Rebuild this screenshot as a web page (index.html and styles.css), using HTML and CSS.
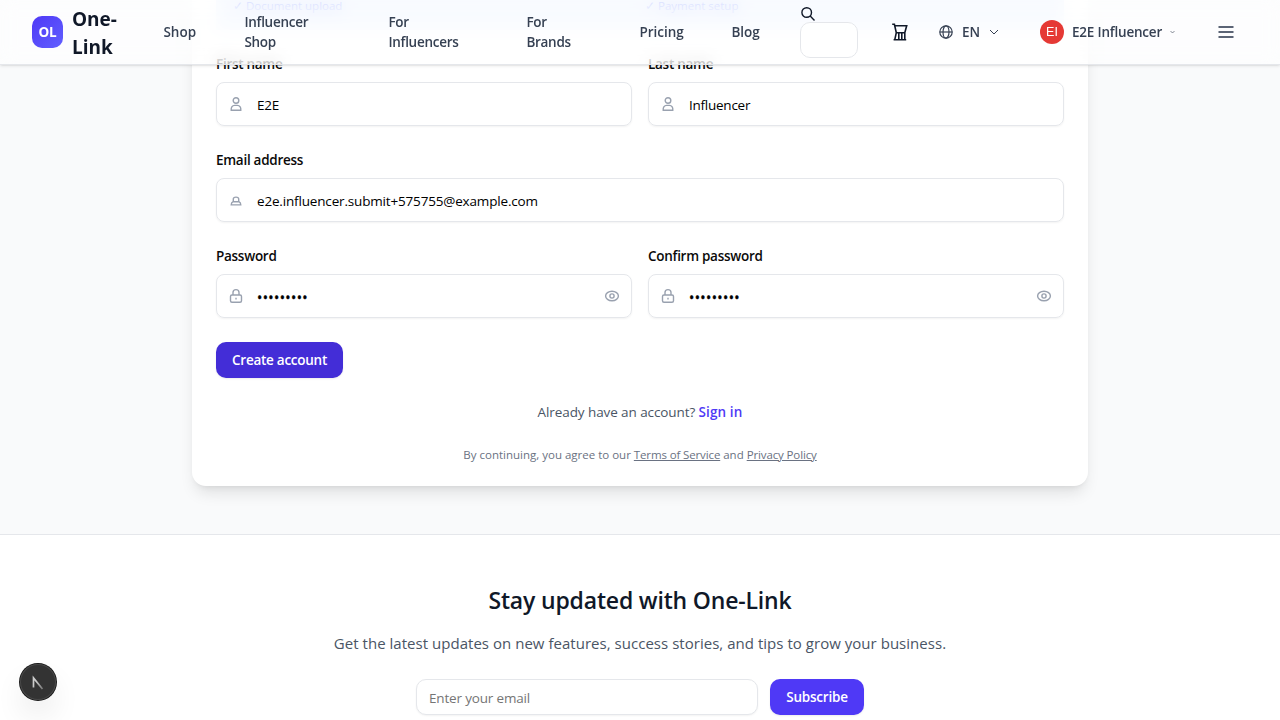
FILE: index.html
```html
<!DOCTYPE html>
<html lang="en">
<head>
<meta charset="utf-8">
<title>One-Link – Create account</title>
<link rel="stylesheet" href="styles.css">
</head>
<body>
<svg class="sprite" aria-hidden="true">
  <symbol id="user" viewBox="0 0 16 16"><circle cx="8" cy="4.500" r="2.800"/><path d="M3.200 14.200c-.3-3 1.300-4.800 3.300-4.800h3c2 0 3.600 1.800 3.300 4.800z"/></symbol>
  <symbol id="mail" viewBox="0 0 16 16"><path d="M5.300 9.700V7.100c0-1.300 1-2 2.700-2s2.700.7 2.700 2v2.600M5.100 9.700h5.800c1.300.6 1.900 1.700 1.900 3.200H3.200c0-1.500.6-2.600 1.900-3.200z"/></symbol>
  <symbol id="lock" viewBox="0 0 16 16"><path d="M5 7V4.400C5 2.600 6 1.600 8 1.600s3 1 3 2.800V7"/><rect x="2.500" y="7" width="11" height="7.200" rx="1.500"/><path d="M8 9.700v1.800"/></symbol>
  <symbol id="eye" viewBox="0 0 16 16"><ellipse cx="8" cy="8" rx="6.400" ry="4.700"/><circle cx="8" cy="8" r="2.100"/></symbol>
</svg>

<header class="header">
  <a class="brand"><span class="logo">OL</span><span class="brand-name">One-<br>Link</span></a>
  <a class="nav">Shop</a>
  <a class="nav tight">Influencer<br>Shop</a>
  <a class="nav tight">For<br>Influencers</a>
  <a class="nav tight">For<br>Brands</a>
  <a class="nav">Pricing</a>
  <a class="nav">Blog</a>
  <div class="search">
    <svg width="16" height="16" viewBox="0 0 16 16"><circle cx="6.700" cy="6.500" r="4.800"/><path d="M10.200 10.100l4.300 4.300"/></svg>
    <input class="search-box" aria-label="Search">
  </div>
  <svg class="cart" width="18" height="20" viewBox="0 0 18 20"><path d="M1.200 2.300h2.200l1.900 8.400h8.500L15.700 3.700H4M5.300 10.700l-1.500 7M13.800 10.700v7M2.600 17.700h12.600M7.800 11v6.500M10.800 11v6.500"/></svg>
  <div class="lang">
    <svg width="14" height="14" viewBox="0 0 14 14"><circle cx="7" cy="7" r="6.200"/><ellipse cx="7" cy="7" rx="3" ry="6.200"/><path d="M.8 7h12.400"/></svg>
    <span>EN</span>
    <svg class="chev" width="10" height="6" viewBox="0 0 10 6"><path d="M1 1l4 4 4-4"/></svg>
  </div>
  <div class="account">
    <span class="avatar">EI</span><span>E2E Influencer</span>
    <svg class="chev-small" width="5" height="4" viewBox="0 0 5 4"><path d="M.5 1l2 2 2-2"/></svg>
  </div>
  <svg class="menu" width="16" height="14" viewBox="0 0 16 14"><path d="M.5 2h15M.5 7h15M.5 12h15"/></svg>
</header>

<main class="main">
  <section class="card">
    <div class="steps"><span>✓ Document upload</span><span>✓ Payment setup</span></div>
    <form class="form">
      <div class="pair">
        <label class="field"><span class="label">First name</span>
          <span class="control"><svg><use href="#user"/></svg><span class="value">E2E</span></span></label>
        <label class="field"><span class="label">Last name</span>
          <span class="control"><svg><use href="#user"/></svg><span class="value">Influencer</span></span></label>
      </div>
      <label class="field"><span class="label">Email address</span>
        <span class="control"><svg><use href="#mail"/></svg><span class="value email">e2e.influencer.submit+575755@example.com</span></span></label>
      <div class="pair">
        <label class="field"><span class="label">Password</span>
          <span class="control"><svg><use href="#lock"/></svg><span class="value dots">•••••••••</span><svg><use href="#eye"/></svg></span></label>
        <label class="field"><span class="label">Confirm password</span>
          <span class="control"><svg><use href="#lock"/></svg><span class="value dots">•••••••••</span><svg><use href="#eye"/></svg></span></label>
      </div>
      <button class="button create" type="button">Create account</button>
    </form>
    <p class="signin">Already have an account? <a>Sign in</a></p>
    <p class="legal">By continuing, you agree to our <a>Terms of Service</a> and <a>Privacy Policy</a></p>
  </section>
</main>

<footer class="footer">
  <h2>Stay updated with One-Link</h2>
  <p>Get the latest updates on new features, success stories, and tips to grow your business.</p>
  <div class="subscribe">
    <input type="email" placeholder="Enter your email">
    <button class="button" type="button">Subscribe</button>
  </div>
</footer>

<div class="badge"><svg width="14" height="16" viewBox="0 0 14 16"><defs><linearGradient id="fade" x1="0" y1="0" x2="1" y2="1"><stop offset=".3" stop-color="#ccc"/><stop offset="1" stop-color="#777"/></linearGradient></defs><path d="M2.500 13.500V4L11.500 15" stroke="url(#fade)"/></svg></div>
</body>
</html>
```
FILE: styles.css
```css
* { box-sizing: border-box; }
body {
  margin: 0;
  height: 720px;
  overflow: hidden;
  background: #f9fafb;
  color: #0a0a0a;
  font: 13.5px/20px "Open Sans", "Noto Sans", sans-serif;
}
p, h2 { margin: 0; }
svg { fill: none; stroke: currentColor; flex: none; }
.sprite { position: absolute; width: 0; height: 0; }
input, button { font: inherit; }

.header {
  position: fixed;
  inset: 0 0 auto 0;
  z-index: 5;
  height: 65px;
  padding-left: 32px;
  display: grid;
  grid-template-columns: 131px 81px 144px 138px 113px 92px 69px 91px 48px 101px 178px 16px;
  align-items: center;
  color: #364153;
  font-weight: 600;
  border-bottom: 1px solid #e5e7eb;
  box-shadow: 0 1px 3px rgba(0, 0, 0, .1), 0 1px 2px -1px rgba(0, 0, 0, .1);
}
.header::before {
  content: "";
  position: absolute;
  inset: 0;
  z-index: -1;
  background: rgba(255, 255, 255, .76);
  backdrop-filter: blur(8px);
  opacity: .8;
}
.brand { display: flex; align-items: center; gap: 9px; }
.logo {
  width: 31px;
  height: 32px;
  border-radius: 10px;
  background: linear-gradient(135deg, #4f39f6, #615fff);
  color: #fff;
  font-weight: 700;
  text-align: center;
  line-height: 32px;
  letter-spacing: -.2px;
}
.brand-name {
  padding-top: 2px;
  color: #101828;
  font-size: 19px;
  font-weight: 700;
  line-height: 28px;
}
.nav { padding-left: .4px; }
.tight { letter-spacing: -.28px; }
.search { align-self: start; display: flex; flex-direction: column; padding-top: 6px; color: #101828; }
.search svg { stroke-width: 1.4; }
.search-box {
  width: 58px;
  height: 36px;
  border: 1px solid #e5e7eb;
  border-radius: 10px;
  background: rgba(255, 255, 255, .8);
}
.cart { color: #101828; stroke-width: 1.6; }
.lang { display: flex; align-items: center; }
.lang span { margin: 0 9px; }
.lang svg { stroke-width: 1.2; }
.lang .chev { stroke-width: 1; }
.account { display: flex; align-items: center; gap: 8px; letter-spacing: -.2px; }
.avatar {
  width: 24px;
  height: 24px;
  border-radius: 50%;
  background: #e53935;
  color: #fff;
  font: 12.5px/24px "Liberation Sans", sans-serif;
  text-align: center;
  letter-spacing: 0;
}
.chev-small { stroke-width: .6; }
.menu { color: #5b6475; stroke-width: 1.9; }

.main { height: 534px; }
.card {
  width: 896px;
  height: 486px;
  margin: 0 auto;
  padding: 0 24px;
  background: #fff;
  border-radius: 0 0 14px 14px;
  box-shadow: 0 10px 15px -3px rgba(0, 0, 0, .1), 0 4px 6px -4px rgba(0, 0, 0, .1);
}
.steps {
  height: 30px;
  padding: 0 17px;
  display: grid;
  grid-template-columns: 412px 1fr;
  background: #eef4ff;
  color: #7088ff;
  font-size: 11.5px;
  line-height: 12px;
}
.form { display: flex; flex-direction: column; gap: 24px; padding-top: 24px; }
.pair { display: grid; grid-template-columns: 1fr 1fr; gap: 16px; }
.field { display: flex; flex-direction: column; gap: 8px; }
.label { height: 20px; font-weight: 600; letter-spacing: -.28px; }
.control {
  height: 44px;
  padding: 0 11px;
  display: flex;
  align-items: center;
  border: 1px solid #e5e7eb;
  border-radius: 8px;
  box-shadow: 0 1px 2px rgba(0, 0, 0, .05);
  color: #000;
}
.control svg { width: 16px; height: 16px; color: #99a1af; stroke-width: 1.4; }
.value { flex: 1; margin-left: 13px; padding-top: 2px; letter-spacing: -.25px; }
.email { letter-spacing: -.17px; }
.dots { padding-top: 3px; font: 14px/20px "Open Sans", sans-serif; letter-spacing: .4px; -webkit-text-stroke: .4px #000; }
.button {
  height: 36px;
  padding: 0 16px;
  border: 0;
  border-radius: 10px;
  background: #4f39f6;
  color: #fff;
  font-weight: 600;
  letter-spacing: -.2px;
  box-shadow: 0 1px 2px rgba(0, 0, 0, .08);
}
.create { width: 127px; background: #432dd7; white-space: nowrap; letter-spacing: -.26px; }
.signin { margin-top: 24px; text-align: center; color: #4a5565; letter-spacing: -.09px; }
.signin a { color: #4f39f6; font-weight: 600; letter-spacing: .1px; }
.legal { margin-top: 23px; text-align: center; color: #6a7282; font-size: 11.5px; letter-spacing: 0; }
.legal a { text-decoration: underline; letter-spacing: -.13px; }

.footer {
  height: 186px;
  padding-top: 49px;
  background: #fff;
  border-top: 1px solid #e5e7eb;
  text-align: center;
}
.footer h2 { color: #101828; font-size: 23px; font-weight: 600; line-height: 32px; letter-spacing: -.17px; }
.footer p { margin-top: 15px; color: #4a5565; font-size: 15px; line-height: 24px; letter-spacing: .03px; }
.subscribe { display: flex; justify-content: center; gap: 12px; margin-top: 24px; }
.subscribe input {
  width: 342px;
  height: 36px;
  padding: 2px 12px 0;
  border: 1px solid #e5e7eb;
  border-radius: 10px;
  box-shadow: 0 1px 2px rgba(0, 0, 0, .05);
  letter-spacing: -.17px;
}
.subscribe input::placeholder { color: #757575; }
.subscribe .button { width: 94px; }

.badge {
  position: fixed;
  left: 20px;
  top: 664px;
  width: 36px;
  height: 36px;
  display: flex;
  align-items: center;
  justify-content: center;
  border-radius: 50%;
  background: #333;
  box-shadow: 0 0 0 1px #171717, inset 0 0 0 1px #484848, 0 16px 32px -8px rgba(0, 0, 0, .24);
}
.badge svg { stroke-width: 1.7; }
```
